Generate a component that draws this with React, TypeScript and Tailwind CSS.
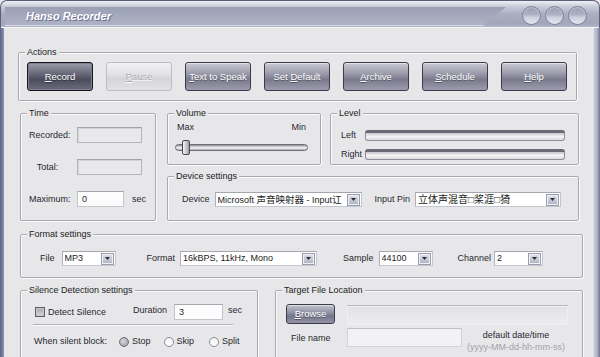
import React from "react";

const FONT = "font-['Liberation_Sans','Noto_Sans_CJK_SC',Arial,sans-serif]";

function U({ text, at = 0 }: { text: string; at?: number }) {
  return (
    <span>
      {text.slice(0, at)}
      <span className="underline underline-offset-[1px]">{text[at]}</span>
      {text.slice(at + 1)}
    </span>
  );
}

function Group({ title, className, children }: { title: string; className: string; children: React.ReactNode }) {
  return (
    <fieldset className={`m-0 p-0 min-w-0 border border-[#a9a9b2] rounded-[2px] shadow-[1px_1px_0_#fbfbfc,inset_1px_1px_0_#fbfbfc] ${className}`}>
      <legend className="ml-[6px] px-[2px] text-[9px] leading-[11px] text-[#1c1c22] bg-[#e7e7ea]">{title}</legend>
      {children}
    </fieldset>
  );
}

function ActionButton({ text, at = 0, kind = "normal" }: { text: string; at?: number; kind?: string }) {
  const look =
    kind === "focus"
      ? "border-[#16161e] text-white bg-[linear-gradient(#9c9caa,#6a6a7a_38%,#4c4c5c_62%,#6c6c7e)] shadow-[inset_0_0_0_1px_#7e7e8e] [text-shadow:0_1px_0_rgba(0,0,0,0.4)]"
      : kind === "disabled"
      ? "border-[#bdbdc5] text-[#aaaab4] bg-[linear-gradient(#f2f2f4,#dedee2_48%,#d4d4d9_56%,#e2e2e6)] [text-shadow:0_1px_0_#fff]"
      : "border-[#3c3c48] text-white bg-[linear-gradient(#cacad4,#9c9cac_38%,#7a7a8c_62%,#9c9cae)] shadow-[inset_0_1px_0_#e2e2ea] [text-shadow:0_1px_0_rgba(0,0,0,0.35)]";
  return (
    <button className={`w-[66px] h-[29px] rounded-[3px] border text-[9.5px] leading-none ${look}`}>
      <U text={text} at={at} />
    </button>
  );
}

function ArrowBox() {
  return (
    <div className="w-[13px] h-[12px] shrink-0 flex items-center justify-center border border-[#9a9eac] bg-[linear-gradient(#dfe1ea,#aeb2c2)] shadow-[inset_0_0_0_1px_#eef0f6]">
      <svg width="5" height="3" viewBox="0 0 5 3">
        <polygon points="0,0 5,0 2.5,3" fill="#2c2c36" />
      </svg>
    </div>
  );
}

function Combo({ w, children }: { w: string; children: React.ReactNode }) {
  return (
    <div className={`${w} h-[15px] shrink-0 flex items-center bg-white border border-[#c6c6ce] border-t-[#a6a6ae] border-l-[#b0b0b8] pl-[2px] pr-[1px]`}>
      <div className="flex-1 min-w-0 overflow-hidden whitespace-nowrap text-[9px] leading-[13px] text-[#1c1c22]">{children}</div>
      <ArrowBox />
    </div>
  );
}

function Radio({ on, label }: { on?: boolean; label: string }) {
  return (
    <div className="flex items-center">
      <div
        className={`w-[10px] h-[10px] rounded-full border ${
          on
            ? "border-[#6e6e78] bg-[radial-gradient(circle_at_40%_40%,#dcdce2,#8c8c96)]"
            : "border-[#8a8a94] bg-[linear-gradient(#f4f4f6,#ffffff)]"
        }`}
      />
      <span className="ml-[3px]">{label}</span>
    </div>
  );
}

export default function App() {
  return (
    <div className={`w-[600px] h-[357px] overflow-hidden flex flex-col bg-[#e7e7ea] ${FONT} text-[#28282e] text-[9px] leading-[11px]`}>
      {/* Title bar */}
      <div className="h-[28px] shrink-0 flex items-start rounded-t-[7px] border border-b-0 border-[#5a5f7c] bg-[linear-gradient(#eef0f5,#c6c9d6_22%,#aaaec0_48%,#a2a6ba_82%,#b6b9ca)] shadow-[inset_0_-1px_0_#f6f6f9]">
        <div className="ml-[4px] mt-[6px] h-[19px] w-[501px] flex items-center pl-[21px] bg-[linear-gradient(#9b9fb5,#a5a9bd_50%,#aeb2c4)] border-b border-[#d8dae4] [clip-path:polygon(0_0,100%_0,calc(100%-23px)_100%,0_100%)]">
          <span className="text-[11px] leading-none font-bold italic text-white [text-shadow:1px_1px_0_#6c7090]">Hanso Recorder</span>
        </div>
        <div className="ml-auto mr-[12px] mt-[5px] flex gap-[4px]">
          {[0, 1, 2].map(i => (
            <div
              key={i}
              className="w-[19px] h-[19px] rounded-full border border-[#7e829a] bg-[linear-gradient(#9a9eb4,#aeb2c4_45%,#ccd0de_60%,#e4e7f0)] shadow-[inset_0_1px_1px_rgba(255,255,255,0.45)]"
            />
          ))}
        </div>
      </div>

      <div className="flex-1 flex min-h-0">
        <div className="w-[4px] bg-[linear-gradient(90deg,#5c6286,#8e94b6)]" />

        <div className="flex-1 pl-[16px] pt-[19px] flex flex-col">
          {/* Actions */}
          <Group title="Actions" className="-ml-[2px] w-[559px]">
            <div className="flex gap-[13px] pl-[8px] pt-[4px] pb-[9px]">
              <ActionButton text="Record" kind="focus" />
              <ActionButton text="Pause" kind="disabled" />
              <ActionButton text="Text to Speak" />
              <ActionButton text="Set Default" at={4} />
              <ActionButton text="Archive" />
              <ActionButton text="Schedule" />
              <ActionButton text="Help" />
            </div>
          </Group>

          {/* Time / Volume / Level / Device */}
          <div className="flex mt-[7px] items-stretch">
            <Group title="Time" className="w-[136px]">
              <div className="flex flex-col gap-[16px] pl-[8px] pt-[8px] pb-[13px]">
                <div className="flex items-center h-[16px]">
                  <span className="w-[41px] text-center">Recorded:</span>
                  <div className="ml-[7px] w-[65px] h-[16px] border border-[#b6b6be] border-t-[#a2a2aa] bg-[#e9e9ec] shadow-[inset_1px_1px_0_#d2d2d8]" />
                </div>
                <div className="flex items-center h-[16px]">
                  <span className="w-[41px] text-center pr-[4px]">Total:</span>
                  <div className="ml-[7px] w-[65px] h-[16px] border border-[#b6b6be] border-t-[#a2a2aa] bg-[#e9e9ec] shadow-[inset_1px_1px_0_#d2d2d8]" />
                </div>
                <div className="flex items-center h-[16px]">
                  <span className="w-[41px] text-center">Maximum:</span>
                  <div className="ml-[7px] w-[47px] h-[16px] flex items-center pl-[4px] border border-[#c4c4cc] border-t-[#a6a6ae] bg-[#fcfcfd]">0</div>
                  <span className="ml-[8px]">sec</span>
                </div>
              </div>
            </Group>

            <div className="ml-[11px] w-[412px] flex flex-col">
              <div className="flex">
                <Group title="Volume" className="w-[154px]">
                  <div className="pl-[9px] pr-[14px] pt-[3px] flex justify-between h-[14px]">
                    <span>Max</span>
                    <span>Min</span>
                  </div>
                  <div className="ml-[7px] mt-[6px] mb-[9px] w-[133px] h-[16px] flex items-center">
                    <div className="relative w-full h-[7px] rounded-full border border-[#6c6c76] bg-[linear-gradient(#8a8a94,#e6e6ea_45%,#f6f6f8_60%,#a8a8b2)]">
                      <div className="absolute left-[6px] top-[-5px] w-[8px] h-[15px] rounded-[2px] border border-[#4a4a56] bg-[linear-gradient(90deg,#f4f4f6,#c4c4cc_60%,#9a9aa4)]" />
                    </div>
                  </div>
                </Group>

                <Group title="Level" className="ml-[9px] w-[249px]">
                  <div className="pl-[10px] pt-[10px] flex flex-col gap-[7px]">
                    <div className="flex items-center h-[12px]">
                      <span className="w-[24px]">Left</span>
                      <div className="w-[200px] h-[11px] rounded-[3px] border-t-[3px] border-b border-[#6a6a74] border-b-[#8e8e98] bg-[linear-gradient(#c4c4cc,#f4f4f6_50%,#dadae0)] shadow-[inset_1px_0_0_#8e8e98,inset_-1px_0_0_#8e8e98]" />
                    </div>
                    <div className="flex items-center h-[12px]">
                      <span className="w-[24px]">Right</span>
                      <div className="w-[200px] h-[11px] rounded-[3px] border-t-[3px] border-b border-[#6a6a74] border-b-[#8e8e98] bg-[linear-gradient(#c4c4cc,#f4f4f6_50%,#dadae0)] shadow-[inset_1px_0_0_#8e8e98,inset_-1px_0_0_#8e8e98]" />
                    </div>
                  </div>
                </Group>
              </div>

              <Group title="Device settings" className="mt-[6px] flex-1">
                <div className="flex items-center pl-[14px] pt-[10px]">
                  <span>Device</span>
                  <div className="ml-[5px]">
                    <Combo w="w-[147px]">
                      Microsoft <span className="text-[9.5px]">声音映射器</span> - Input<span className="text-[9.5px]">讧</span>
                    </Combo>
                  </div>
                  <span className="ml-[13px]">Input Pin</span>
                  <div className="ml-[5px]">
                    <Combo w="w-[146px]">
                      <span className="text-[10px]">立体声混音□桨涯□猗</span>
                    </Combo>
                  </div>
                </div>
              </Group>
            </div>
          </div>

          {/* Format settings */}
          <Group title="Format settings" className="mt-[8px] w-[563px]">
            <div className="flex items-center pl-[19px] pt-[11px] pb-[11px]">
              <span>File</span>
              <div className="ml-[7px]">
                <Combo w="w-[54px]">MP3</Combo>
              </div>
              <span className="ml-[31px]">Format</span>
              <div className="ml-[5px]">
                <Combo w="w-[137px]">16kBPS, 11kHz, Mono</Combo>
              </div>
              <span className="ml-[26px]">Sample</span>
              <div className="ml-[5px]">
                <Combo w="w-[54px]">44100</Combo>
              </div>
              <span className="ml-[25px]">Channel</span>
              <div className="ml-[3px]">
                <Combo w="w-[49px]">2</Combo>
              </div>
            </div>
          </Group>

          {/* Silence / Target */}
          <div className="flex mt-[7px]">
            <Group title="Silence Detection settings" className="w-[238px] h-[110px]">
              <div className="flex items-start pl-[14px] pt-[8px] h-[16px] box-content">
                <div className="mt-[3px] w-[10px] h-[10px] border border-[#5c5c66] bg-[linear-gradient(#a4a4ae,#d6d6dc)] shadow-[inset_0_0_0_1px_#c8c8d0]" />
                <span className="ml-[3px] mt-[3px]">Detect Silence</span>
                <span className="ml-[27px] mt-[1px]">Duration</span>
                <div className="ml-[7px] w-[49px] h-[16px] flex items-center pl-[4px] border border-[#c4c4cc] border-t-[#a6a6ae] bg-[#fcfcfd]">3</div>
                <span className="ml-[5px] mt-[1px]">sec</span>
              </div>
              <div className="ml-[12px] mt-[4px] w-[200px] h-0 border-t border-b border-t-[#b2b2ba] border-b-[#fbfbfc]" />
              <div className="flex items-center pl-[13px] mt-[10px] h-[11px]">
                <span>When silent block:</span>
                <div className="ml-[12px]">
                  <Radio on label="Stop" />
                </div>
                <div className="ml-[13px]">
                  <Radio label="Skip" />
                </div>
                <div className="ml-[15px]">
                  <Radio label="Split" />
                </div>
              </div>
            </Group>

            <Group title="Target File Location" className="ml-[17px] w-[308px] h-[110px]">
              <div className="flex items-start pl-[10px] pt-[8px] h-[21px] box-content">
                <button className="w-[49px] h-[20px] rounded-[3px] border border-[#3c3c48] text-white text-[9.5px] leading-none bg-[linear-gradient(#c4c4ce,#9494a6_40%,#74748a_62%,#9494a6)] shadow-[inset_0_1px_0_#dedee6] [text-shadow:0_1px_0_rgba(0,0,0,0.35)]">
                  <U text="Browse" />
                </button>
                <div className="ml-[12px] mt-[1px] w-[221px] h-[20px] border-t border-[#b8b8c0] bg-[linear-gradient(#e2e2e6,#ededf0)] shadow-[inset_0_0_0_1px_#f0f0f3]" />
              </div>
              <div className="flex items-start pl-[15px] mt-[3px]">
                <span className="w-[56px] mt-[5px]">File name</span>
                <div className="w-[115px] h-[19px] border border-[#d2d2d8] border-t-[#c0c0c8] bg-[#f2f2f4]" />
                <div className="ml-[4px] w-[100px] mt-[2px] text-center leading-[11.5px]">
                  <div>default date/time</div>
                  <div className="text-[#a2a2ac]">(yyyy-MM-dd-hh-mm-ss)</div>
                </div>
              </div>
            </Group>
          </div>
        </div>

        <div className="w-[8px] bg-[linear-gradient(90deg,#f4f4f7,#c8cbd8_30%,#a6aabd_70%,#6c7090)]" />
      </div>
    </div>
  );
}
